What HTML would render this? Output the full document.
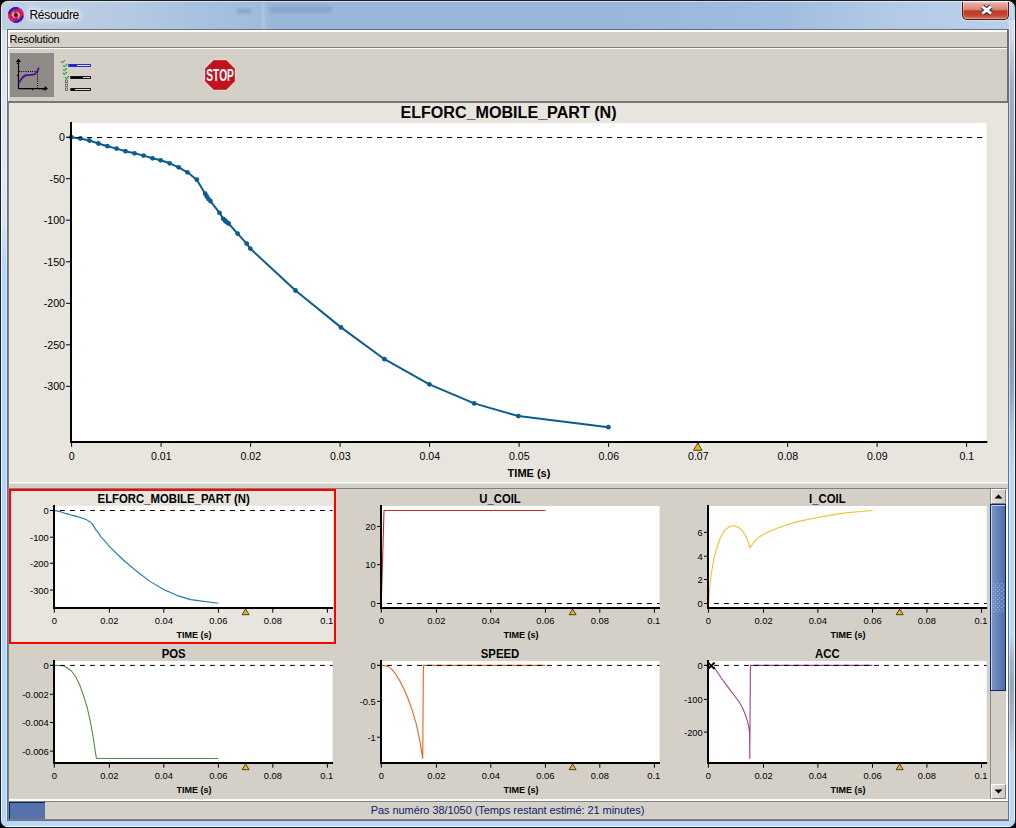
<!DOCTYPE html>
<html><head><meta charset="utf-8"><title>Résoudre</title>
<style>
html,body{margin:0;padding:0;}
body{width:1016px;height:828px;overflow:hidden;background:#000;font-family:"Liberation Sans", sans-serif;position:relative;}
.abs{position:absolute;}
#frame{left:0;top:0;width:1016px;height:828px;box-sizing:border-box;border:1px solid #1c1f26;border-radius:8px 8px 8px 8px;
 background:
  linear-gradient(to right,#c0d0e2 0px,#bccde2 60px,#b4c9e2 130px,#a6c0e0 210px,#a0bbdc 262px,#9ab6d9 270px,#9ab6d9 620px,#a0bcde 780px,#b2c9e6 880px,#bbd0e9 1016px);
 overflow:hidden;}
#frameL{left:0px;top:29px;width:6px;height:791px;background:linear-gradient(to right,rgba(255,255,255,.8) 0,rgba(255,255,255,.8) 1px,rgba(255,255,255,0) 1px,rgba(255,255,255,0) 5px,rgba(255,255,255,.5) 5px,rgba(255,255,255,.5) 6px),linear-gradient(to bottom,#d9e4f1 0,#dfe9f5 150px,#d3e3f6 195px,#b9d7f9 225px,#b5d6fb 240px,#b5d6fb 100%);}
#frameR{left:1008px;top:19px;width:6px;height:801px;background:linear-gradient(to right,rgba(255,255,255,.5) 0,rgba(255,255,255,.5) 1px,rgba(255,255,255,0) 1px,rgba(255,255,255,.08) 5px,rgba(255,255,255,.8) 5px,rgba(255,255,255,.8) 6px),linear-gradient(to bottom,#ccd6ea 0,#c8d0e8 22px,#b4c0d8 40px,#98aac4 70px,#869cb8 260px,#7f97b6 330px,#86a3c8 370px,#a4c4ea 410px,#b5d6fb 450px,#b5d6fb 615px,#9fb5cc 640px,#8fa3b8 665px,#a0b4c8 700px,#b5d6fb 735px,#b5d6fb 100%);}
#frameB{left:0px;top:819px;width:1014px;height:7px;background:linear-gradient(to bottom,#b9d9fb 0,#b9d9fb 6px,#eefaff 6px,#eefaff 7px);}
#hl{left:1px;top:1px;width:1012px;height:826px;border:1px solid rgba(255,255,255,.55);border-radius:7px;box-sizing:border-box;border-bottom:none;border-right-color:rgba(255,255,255,.4);height:40px;border-bottom-left-radius:0;border-bottom-right-radius:0;}
#client{left:7px;top:29px;width:1002px;height:792px;box-sizing:border-box;border:1px solid #6a7078;background:#d4d0c8;}
#title{left:29.5px;top:8px;font-size:12px;color:#000;letter-spacing:-0.32px;text-shadow:0 0 6px #fff,0 0 6px #fff,0 0 10px #fff;}
#close{left:962px;top:2px;width:47px;height:18px;box-sizing:border-box;border:1px solid #4e1a16;border-top:none;border-radius:0 0 5px 5px;
 background:linear-gradient(to bottom,#eeb0a6 0,#e09a8c 25%,#d48070 46%,#c23c26 52%,#c4422c 75%,#d27458 100%);box-shadow:inset 0 0 0 1px rgba(255,255,255,.3),0 0 0 1px rgba(255,255,255,.35);}
#menubar{left:8px;top:30px;width:1000px;height:17px;background:#d4d0c8;border-top:2px solid #fff;border-left:2px solid #fff;box-sizing:border-box;}
#menutxt{left:9.5px;top:33px;font-size:11px;color:#000;letter-spacing:-0.2px;}
#sep1{left:8px;top:47px;width:1000px;height:1px;background:#808080;}
#sep1b{left:8px;top:48px;width:1000px;height:1px;background:#fff;}
#toolbar{left:8px;top:49px;width:1000px;height:52px;background:#d4d0c8;border-left:1px solid #fff;box-sizing:border-box;}
#sep2{left:8px;top:101px;width:1000px;height:2px;background:#767877;}
#mainp{left:8px;top:103px;width:1000px;height:379px;background:#e8e4de;}
#mainpL{left:8px;top:103px;width:1px;height:717px;background:#7c8685;}
#sep3{left:8px;top:482px;width:1000px;height:2px;background:linear-gradient(#fdfdfc 0,#fdfdfc 50%,#e6e4df 50%,#e6e4df 100%);}
#lowp{left:8px;top:484px;width:1000px;height:316px;background:#d4d0c8;}
#sep4{left:8px;top:488px;width:999px;height:1px;background:#808080;}
#sel{left:9px;top:489px;width:327px;height:155px;box-sizing:border-box;border:2px solid #f00;background:#e8e4de;}
#rwhite{left:1006px;top:489px;width:2px;height:311px;background:#fff;}
#sb{left:990px;top:489px;width:16px;height:310px;background:#d4d0c8;border-left:1px solid #8a8a86;box-sizing:border-box;}
.sbtn{left:991px;width:15px;height:15px;box-sizing:border-box;background:linear-gradient(to right,#e4e1da,#cfcbc3);border:1px solid;border-color:#fff #808080 #808080 #fff;}
#thumb{left:990px;top:504px;width:16px;height:187px;box-sizing:border-box;border:1px solid #0a246a;background:linear-gradient(to right,#7f98c8 0,#6783b8 45%,#4f6ea9 100%);box-shadow:inset 1px 1px 0 #b9d3f5;}
#sep5{left:8px;top:799px;width:1000px;height:2px;background:#fff;}
#sep6{left:8px;top:801px;width:1000px;height:1px;background:#808080;}
#status{left:8px;top:802px;width:1000px;height:17px;background:#d4d0c8;}
#prog{left:9px;top:802px;width:36px;height:17px;background:#5572ac;border-left:1px solid #0a246a;border-top:1px solid #0a246a;box-sizing:border-box;}
#stxt{left:7.5px;top:804px;width:1000px;text-align:center;font-size:11px;color:#0a246a;letter-spacing:-0.065px;}
#sep7{left:8px;top:819px;width:1000px;height:1px;background:#808080;}
.tk{font:11px "Liberation Sans", sans-serif;fill:#000;}
.tkb{font:bold 11px "Liberation Sans", sans-serif;fill:#000;}
.ttl{font:bold 16px "Liberation Sans", sans-serif;fill:#000;}
.tks{font:9.4px "Liberation Sans", sans-serif;fill:#000;}
.tksb{font:bold 9px "Liberation Sans", sans-serif;fill:#000;}
.ttls{font:bold 12.4px "Liberation Sans", sans-serif;fill:#000;}
</style></head><body>
<div id="frame" class="abs"><div id="frameL" class="abs"></div><div id="frameR" class="abs"></div><div id="frameB" class="abs"></div></div>
<div id="hl" class="abs"></div>
<div id="client" class="abs"></div>
<div class="abs" style="left:270px;top:6px;width:62px;height:7px;background:#7d9ac2;opacity:.55;filter:blur(1.6px);border-radius:3px"></div><div class="abs" style="left:237px;top:9px;width:14px;height:4px;background:#7088a8;opacity:.5;filter:blur(1.5px)"></div><div class="abs" style="left:262px;top:2px;width:3px;height:27px;background:#b8cce6;opacity:.7;filter:blur(1px)"></div>
<div id="title" class="abs">Résoudre</div>
<div id="close" class="abs"><svg width="45" height="18" viewBox="0 0 45 18" style="position:absolute;left:0;top:0"><path d="M19.4,4.5 L28,11.5 M28,4.5 L19.4,11.5" stroke="#3a3f58" stroke-width="5" fill="none"/><path d="M19.4,4.5 L28,11.5 M28,4.5 L19.4,11.5" stroke="#fff" stroke-width="2.9" fill="none"/></svg></div>
<div id="menubar" class="abs"></div><div id="menutxt" class="abs">Resolution</div>
<div id="sep1" class="abs"></div><div id="sep1b" class="abs"></div>
<div id="toolbar" class="abs"></div><div id="sep2" class="abs"></div><div class="abs" style="left:1007px;top:30px;width:1px;height:72px;background:#6e6e6e"></div>
<div id="mainp" class="abs"></div>
<div id="sep3" class="abs"></div>
<div id="lowp" class="abs"></div><div id="sep4" class="abs"></div>
<div id="sel" class="abs"></div>
<div id="rwhite" class="abs"></div>
<div id="sb" class="abs"></div>
<div class="abs sbtn" style="top:489px"><svg width="13" height="13" style="position:absolute;left:0;top:0"><path d="M2.5,8.5 L6.5,4.5 L10.5,8.5 Z" fill="#000"/></svg></div>
<div class="abs sbtn" style="top:784px"><svg width="13" height="13" style="position:absolute;left:0;top:0"><path d="M2.5,4.5 L6.5,8.5 L10.5,4.5 Z" fill="#000"/></svg></div>
<div id="thumb" class="abs"></div>
<svg class="abs" style="left:993px;top:583px" width="12" height="30" viewBox="0 0 12 30"><defs><pattern id="gp" x="0" y="0" width="4" height="4" patternUnits="userSpaceOnUse"><rect x="0" y="0" width="1.2" height="1.2" fill="#9db6e4"/><rect x="2" y="2" width="1.2" height="1.2" fill="#9db6e4"/></pattern></defs><rect x="0" y="0" width="11.3" height="29.3" fill="url(#gp)"/></svg>
<div id="sep5" class="abs"></div><div id="sep6" class="abs"></div>
<div id="status" class="abs"></div><div id="prog" class="abs"></div>
<div id="stxt" class="abs">Pas numéro 38/1050 (Temps restant estimé: 21 minutes)</div>
<div id="sep7" class="abs"></div><div id="mainpL" class="abs"></div>
<svg class="abs" style="left:0;top:0" width="1016" height="110" viewBox="0 0 1016 110">
<defs><radialGradient id="sw" cx="0.5" cy="0.5" r="0.5"><stop offset="0" stop-color="#e01888"/><stop offset="0.55" stop-color="#f0204a"/><stop offset="0.8" stop-color="#f0105e"/><stop offset="1" stop-color="#c218c0"/></radialGradient></defs>
<g transform="translate(15.9,14.9)">
<circle cx="0" cy="0" r="8" fill="url(#sw)"/>
<path d="M-6.6,-1.8 A6.9,6.9 0 0 1 1.2,-6.8" stroke="#2418c8" stroke-width="2.1" fill="none" stroke-linecap="round"/>
<path d="M6.6,1.8 A6.9,6.9 0 0 1 -1.2,6.8" stroke="#2418c8" stroke-width="2.1" fill="none" stroke-linecap="round"/>
<circle cx="0" cy="0" r="4.6" fill="#c01ca0" stroke="#3a1cb0" stroke-width="1" stroke-dasharray="1.6,1.2"/>
<path d="M-1.6,-3.6 C-5.2,-2.2 -4.6,2.6 -0.6,3.2 C-2.6,1.6 -3,-1.2 -1.6,-3.6 Z" fill="#ffee00" stroke="#ff8a00" stroke-width="0.5"/>
<path d="M1.6,3.6 C5.2,2.2 4.6,-2.6 0.6,-3.2 C2.6,-1.6 3,1.2 1.6,3.6 Z" fill="#ffee00" stroke="#ff8a00" stroke-width="0.5"/>
<circle cx="0" cy="0" r="1.5" fill="#1c0c86"/>
</g>
<rect x="10" y="53" width="44" height="44" fill="#8f8b86"/>
<path d="M18.5,61 V88.6 M18,88.6 H46" stroke="#000" stroke-width="1.2" fill="none"/>
<path d="M18.5,58.8 l-2.6,3.3 h5.2 z M48,88.6 l-3.4,-2.5 v5 z" fill="#000"/>
<path d="M19,71.5 H38.5 M37.5,72 V88" stroke="#000" stroke-width="1" stroke-dasharray="1,1.2" fill="none"/>
<path d="M16.8,63.5 h1.5 M16.8,75.5 h1.5 M32.5,89 v1.2 M43,89 v1.2" stroke="#000" stroke-width="1"/>
<path d="M19,82.5 C21.5,79 23,76 26,75.3 C30,74.6 33,75.2 35,74 C37,72.8 38,71 38.5,68.5" stroke="#500f90" stroke-width="1.9" fill="none" stroke-linecap="round"/>
<path d="M61,61.3 l1.4,1.3 l2.7,-2.5" stroke="#18a018" stroke-width="1.1" fill="none"/>
<path d="M63,65.3 l1.4,1.3 l2.7,-2.5" stroke="#18a018" stroke-width="1.1" fill="none"/>
<path d="M63,69.3 l1.4,1.3 l2.7,-2.5" stroke="#18a018" stroke-width="1.1" fill="none"/>
<path d="M63,73.0 l1.4,1.3 l2.7,-2.5" stroke="#18a018" stroke-width="1.1" fill="none"/>
<path d="M65,77.3 l1.4,1.3 l2.7,-2.5" stroke="#18a018" stroke-width="1.1" fill="none"/>
<rect x="65.5" y="80" width="2" height="2.4" fill="#ddd" stroke="#444" stroke-width="0.7"/>
<rect x="65.5" y="84" width="2" height="2.4" fill="#ddd" stroke="#444" stroke-width="0.7"/>
<rect x="65.5" y="88" width="2" height="2.4" fill="#ddd" stroke="#444" stroke-width="0.7"/>
<rect x="68.3" y="64.1" width="22.6" height="2.8" fill="#1a1acc"/><rect x="77" y="65" width="13" height="1" fill="#dde"/>
<rect x="70.3" y="76.1" width="20.6" height="2.8" fill="#000"/><rect x="83" y="77" width="7" height="1" fill="#ddd"/>
<rect x="70.3" y="88.1" width="20.6" height="2.8" fill="#000"/><rect x="75" y="89" width="15" height="1" fill="#ddd"/>
<polygon points="235.34,81.35 226.35,90.34 213.65,90.34 204.66,81.35 204.66,68.65 213.65,59.66 226.35,59.66 235.34,68.65" fill="#c1121f" stroke="#ecebe6" stroke-width="1"/>
<text x="220.1" y="80.7" text-anchor="middle" style="font:bold 16px 'Liberation Sans',sans-serif;fill:#fff" textLength="27.6" lengthAdjust="spacingAndGlyphs">STOP</text>
</svg>
<svg class="abs" style="left:0;top:0" width="1016" height="828" viewBox="0 0 1016 828">
<rect x="72" y="123" width="914.5" height="318" fill="#fff"/>
<path d="M71.3,137.2 L80.3,138.5 L89.4,140.5 L98.4,143.5 L107.4,146.2 L116.5,148.6 L125.5,151.2 L134.5,153.3 L143.6,155.6 L152.6,158.3 L160.6,160.3 L169.7,163.3 L178.7,167.3 L187.4,172.3 L196.8,179.7 L205.2,193.7 L206.8,196.4 L208.5,199.1 L210.5,201.1 L219.5,212.8 L223.2,218.8 L224.9,220.5 L226.6,222.2 L228.6,223.5 L237.6,233.6 L246.7,243.6 L250.3,248.6 L295.5,290.5 L341.0,327.4 L384.5,359.2 L429.4,384.3 L474.2,403.4 L518.4,416.1 L608.4,427.2" fill="none" stroke="#0c5c8f" stroke-width="2" stroke-linejoin="round"/>
<circle cx="71.3" cy="137.2" r="2.4" fill="#0c5c8f"/>
<circle cx="80.3" cy="138.5" r="2.4" fill="#0c5c8f"/>
<circle cx="89.4" cy="140.5" r="2.4" fill="#0c5c8f"/>
<circle cx="98.4" cy="143.5" r="2.4" fill="#0c5c8f"/>
<circle cx="107.4" cy="146.2" r="2.4" fill="#0c5c8f"/>
<circle cx="116.5" cy="148.6" r="2.4" fill="#0c5c8f"/>
<circle cx="125.5" cy="151.2" r="2.4" fill="#0c5c8f"/>
<circle cx="134.5" cy="153.3" r="2.4" fill="#0c5c8f"/>
<circle cx="143.6" cy="155.6" r="2.4" fill="#0c5c8f"/>
<circle cx="152.6" cy="158.3" r="2.4" fill="#0c5c8f"/>
<circle cx="160.6" cy="160.3" r="2.4" fill="#0c5c8f"/>
<circle cx="169.7" cy="163.3" r="2.4" fill="#0c5c8f"/>
<circle cx="178.7" cy="167.3" r="2.4" fill="#0c5c8f"/>
<circle cx="187.4" cy="172.3" r="2.4" fill="#0c5c8f"/>
<circle cx="196.8" cy="179.7" r="2.4" fill="#0c5c8f"/>
<circle cx="205.2" cy="193.7" r="2.4" fill="#0c5c8f"/>
<circle cx="206.8" cy="196.4" r="2.4" fill="#0c5c8f"/>
<circle cx="208.5" cy="199.1" r="2.4" fill="#0c5c8f"/>
<circle cx="210.5" cy="201.1" r="2.4" fill="#0c5c8f"/>
<circle cx="219.5" cy="212.8" r="2.4" fill="#0c5c8f"/>
<circle cx="223.2" cy="218.8" r="2.4" fill="#0c5c8f"/>
<circle cx="224.9" cy="220.5" r="2.4" fill="#0c5c8f"/>
<circle cx="226.6" cy="222.2" r="2.4" fill="#0c5c8f"/>
<circle cx="228.6" cy="223.5" r="2.4" fill="#0c5c8f"/>
<circle cx="237.6" cy="233.6" r="2.4" fill="#0c5c8f"/>
<circle cx="246.7" cy="243.6" r="2.4" fill="#0c5c8f"/>
<circle cx="250.3" cy="248.6" r="2.4" fill="#0c5c8f"/>
<circle cx="295.5" cy="290.5" r="2.4" fill="#0c5c8f"/>
<circle cx="341.0" cy="327.4" r="2.4" fill="#0c5c8f"/>
<circle cx="384.5" cy="359.2" r="2.4" fill="#0c5c8f"/>
<circle cx="429.4" cy="384.3" r="2.4" fill="#0c5c8f"/>
<circle cx="474.2" cy="403.4" r="2.4" fill="#0c5c8f"/>
<circle cx="518.4" cy="416.1" r="2.4" fill="#0c5c8f"/>
<circle cx="608.4" cy="427.2" r="2.4" fill="#0c5c8f"/>
<line x1="67" y1="137.5" x2="986.5" y2="137.5" stroke="#000" stroke-width="1" stroke-dasharray="5.2,4.8"/>
<rect x="70" y="122" width="2" height="321" fill="#000"/>
<rect x="70" y="441" width="917.3" height="2" fill="#000"/>
<line x1="66" y1="137.2" x2="70" y2="137.2" stroke="#000" stroke-width="1"/>
<text transform="translate(65,141.2) scale(0.97,1)" text-anchor="end" class="tk">0</text>
<line x1="66" y1="178.7" x2="70" y2="178.7" stroke="#000" stroke-width="1"/>
<text transform="translate(65,182.7) scale(0.97,1)" text-anchor="end" class="tk">-50</text>
<line x1="66" y1="220.2" x2="70" y2="220.2" stroke="#000" stroke-width="1"/>
<text transform="translate(65,224.2) scale(0.97,1)" text-anchor="end" class="tk">-100</text>
<line x1="66" y1="261.8" x2="70" y2="261.8" stroke="#000" stroke-width="1"/>
<text transform="translate(65,265.8) scale(0.97,1)" text-anchor="end" class="tk">-150</text>
<line x1="66" y1="303.3" x2="70" y2="303.3" stroke="#000" stroke-width="1"/>
<text transform="translate(65,307.3) scale(0.97,1)" text-anchor="end" class="tk">-200</text>
<line x1="66" y1="344.8" x2="70" y2="344.8" stroke="#000" stroke-width="1"/>
<text transform="translate(65,348.8) scale(0.97,1)" text-anchor="end" class="tk">-250</text>
<line x1="66" y1="386.3" x2="70" y2="386.3" stroke="#000" stroke-width="1"/>
<text transform="translate(65,390.3) scale(0.97,1)" text-anchor="end" class="tk">-300</text>
<line x1="71.6" y1="443" x2="71.6" y2="446.8" stroke="#000" stroke-width="1"/>
<text transform="translate(71.8,460.2) scale(0.96,1)" text-anchor="middle" class="tk">0</text>
<line x1="161.1" y1="443" x2="161.1" y2="446.8" stroke="#000" stroke-width="1"/>
<text transform="translate(161.3,460.2) scale(0.96,1)" text-anchor="middle" class="tk">0.01</text>
<line x1="250.6" y1="443" x2="250.6" y2="446.8" stroke="#000" stroke-width="1"/>
<text transform="translate(250.8,460.2) scale(0.96,1)" text-anchor="middle" class="tk">0.02</text>
<line x1="340.1" y1="443" x2="340.1" y2="446.8" stroke="#000" stroke-width="1"/>
<text transform="translate(340.3,460.2) scale(0.96,1)" text-anchor="middle" class="tk">0.03</text>
<line x1="429.6" y1="443" x2="429.6" y2="446.8" stroke="#000" stroke-width="1"/>
<text transform="translate(429.8,460.2) scale(0.96,1)" text-anchor="middle" class="tk">0.04</text>
<line x1="519.1" y1="443" x2="519.1" y2="446.8" stroke="#000" stroke-width="1"/>
<text transform="translate(519.3,460.2) scale(0.96,1)" text-anchor="middle" class="tk">0.05</text>
<line x1="608.6" y1="443" x2="608.6" y2="446.8" stroke="#000" stroke-width="1"/>
<text transform="translate(608.8,460.2) scale(0.96,1)" text-anchor="middle" class="tk">0.06</text>
<line x1="698.1" y1="443" x2="698.1" y2="446.8" stroke="#000" stroke-width="1"/>
<text transform="translate(698.3,460.2) scale(0.96,1)" text-anchor="middle" class="tk">0.07</text>
<line x1="787.6" y1="443" x2="787.6" y2="446.8" stroke="#000" stroke-width="1"/>
<text transform="translate(787.8,460.2) scale(0.96,1)" text-anchor="middle" class="tk">0.08</text>
<line x1="877.1" y1="443" x2="877.1" y2="446.8" stroke="#000" stroke-width="1"/>
<text transform="translate(877.3,460.2) scale(0.96,1)" text-anchor="middle" class="tk">0.09</text>
<line x1="966.6" y1="443" x2="966.6" y2="446.8" stroke="#000" stroke-width="1"/>
<text transform="translate(966.8,460.2) scale(0.96,1)" text-anchor="middle" class="tk">0.1</text>
<path d="M693.6,450.3 L697.8,443 L702.0,450.3 Z" fill="#f5b800" stroke="#222" stroke-width="0.8"/>
<text x="529" y="477" text-anchor="middle" class="tkb">TIME (s)</text>
<text x="508.5" y="118" text-anchor="middle" class="ttl" textLength="216.2" lengthAdjust="spacingAndGlyphs">ELFORC_MOBILE_PART (N)</text>
</svg>
<svg class="abs" style="left:0;top:0" width="1016" height="828" viewBox="0 0 1016 828">
<rect x="55.0" y="506" width="277.6" height="101" fill="#fff"/>
<path d="M54.3,510.5 L57.0,510.9 L59.8,511.6 L62.6,512.5 L65.3,513.4 L68.1,514.1 L70.9,515.0 L73.6,515.6 L76.4,516.4 L79.1,517.2 L81.6,517.9 L84.3,518.8 L87.1,520.1 L89.8,521.7 L92.6,524.1 L95.2,528.6 L95.7,529.4 L96.2,530.3 L96.8,530.9 L99.6,534.7 L100.7,536.6 L101.2,537.1 L101.7,537.7 L102.3,538.1 L105.1,541.3 L107.9,544.5 L109.0,546.1 L122.8,559.5 L136.7,571.3 L149.9,581.4 L163.7,589.5 L177.3,595.6 L190.8,599.6 L218.3,603.2" fill="none" stroke="#2474a6" stroke-width="1.1" stroke-linejoin="round"/>
<line x1="50.0" y1="510.5" x2="332.6" y2="510.5" stroke="#000" stroke-width="1" stroke-dasharray="4.9,5.1"/>
<rect x="53" y="505" width="2" height="104" fill="#000"/>
<rect x="53" y="607" width="280.0" height="2" fill="#000"/>
<line x1="50.0" y1="510.5" x2="53.0" y2="510.5" stroke="#000" stroke-width="1"/>
<text x="48.8" y="513.9" text-anchor="end" class="tks">0</text>
<line x1="50.0" y1="537.2" x2="53.0" y2="537.2" stroke="#000" stroke-width="1"/>
<text x="48.8" y="540.6" text-anchor="end" class="tks">-100</text>
<line x1="50.0" y1="563.3" x2="53.0" y2="563.3" stroke="#000" stroke-width="1"/>
<text x="48.8" y="566.7" text-anchor="end" class="tks">-200</text>
<line x1="50.0" y1="590.1" x2="53.0" y2="590.1" stroke="#000" stroke-width="1"/>
<text x="48.8" y="593.5" text-anchor="end" class="tks">-300</text>
<line x1="54.3" y1="609" x2="54.3" y2="612.7" stroke="#000" stroke-width="1"/>
<text x="54.3" y="624.0" text-anchor="middle" class="tks">0</text>
<line x1="109.4" y1="609" x2="109.4" y2="612.7" stroke="#000" stroke-width="1"/>
<text x="109.4" y="624.0" text-anchor="middle" class="tks">0.02</text>
<line x1="163.8" y1="609" x2="163.8" y2="612.7" stroke="#000" stroke-width="1"/>
<text x="163.8" y="624.0" text-anchor="middle" class="tks">0.04</text>
<line x1="218.4" y1="609" x2="218.4" y2="612.7" stroke="#000" stroke-width="1"/>
<text x="218.4" y="624.0" text-anchor="middle" class="tks">0.06</text>
<line x1="272.8" y1="609" x2="272.8" y2="612.7" stroke="#000" stroke-width="1"/>
<text x="272.8" y="624.0" text-anchor="middle" class="tks">0.08</text>
<line x1="327.4" y1="609" x2="327.4" y2="612.7" stroke="#000" stroke-width="1"/>
<text x="326.8" y="624.0" text-anchor="middle" class="tks">0.1</text>
<path d="M242.1,614.7 L245.6,609.0 L249.1,614.7 Z" fill="#f5b800" stroke="#222" stroke-width="0.8"/>
<text x="193.9" y="638.2" text-anchor="middle" class="tksb">TIME (s)</text>
<text transform="translate(173.7,502.7) scale(0.915,1)" x="0" y="0" text-anchor="middle" class="ttls">ELFORC_MOBILE_PART (N)</text>

<rect x="382.0" y="506" width="277.6" height="101" fill="#fff"/>
<path d="M381.3,603.5 L384.0,510.5 L545.3,510.5" fill="none" stroke="#c42a1c" stroke-width="1.1" stroke-linejoin="round"/>
<line x1="377.0" y1="603.5" x2="659.6" y2="603.5" stroke="#000" stroke-width="1" stroke-dasharray="4.9,5.1"/>
<rect x="380" y="505" width="2" height="104" fill="#000"/>
<rect x="380" y="607" width="280.0" height="2" fill="#000"/>
<line x1="377.0" y1="526.5" x2="380.0" y2="526.5" stroke="#000" stroke-width="1"/>
<text x="375.8" y="529.9" text-anchor="end" class="tks">20</text>
<line x1="377.0" y1="564.7" x2="380.0" y2="564.7" stroke="#000" stroke-width="1"/>
<text x="375.8" y="568.1" text-anchor="end" class="tks">10</text>
<line x1="377.0" y1="603.5" x2="380.0" y2="603.5" stroke="#000" stroke-width="1"/>
<text x="375.8" y="606.9" text-anchor="end" class="tks">0</text>
<line x1="381.3" y1="609" x2="381.3" y2="612.7" stroke="#000" stroke-width="1"/>
<text x="381.3" y="624.0" text-anchor="middle" class="tks">0</text>
<line x1="436.4" y1="609" x2="436.4" y2="612.7" stroke="#000" stroke-width="1"/>
<text x="436.4" y="624.0" text-anchor="middle" class="tks">0.02</text>
<line x1="490.8" y1="609" x2="490.8" y2="612.7" stroke="#000" stroke-width="1"/>
<text x="490.8" y="624.0" text-anchor="middle" class="tks">0.04</text>
<line x1="545.4" y1="609" x2="545.4" y2="612.7" stroke="#000" stroke-width="1"/>
<text x="545.4" y="624.0" text-anchor="middle" class="tks">0.06</text>
<line x1="599.8" y1="609" x2="599.8" y2="612.7" stroke="#000" stroke-width="1"/>
<text x="599.8" y="624.0" text-anchor="middle" class="tks">0.08</text>
<line x1="654.4" y1="609" x2="654.4" y2="612.7" stroke="#000" stroke-width="1"/>
<text x="653.8" y="624.0" text-anchor="middle" class="tks">0.1</text>
<path d="M569.1,614.7 L572.6,609.0 L576.1,614.7 Z" fill="#f5b800" stroke="#222" stroke-width="0.8"/>
<text x="520.9" y="638.2" text-anchor="middle" class="tksb">TIME (s)</text>
<text transform="translate(500.0,502.7) scale(0.915,1)" x="0" y="0" text-anchor="middle" class="ttls">U_COIL</text>

<rect x="709.0" y="506" width="277.7" height="101" fill="#fff"/>
<path d="M708.8,603.5 L709.4,590.3 L711.1,575.0 L713.9,558.3 L717.4,545.8 L720.8,536.8 L725.0,529.9 L729.2,526.7 L733.3,525.7 L737.5,526.7 L741.7,529.9 L745.1,534.7 L747.9,541.0 L749.9,547.6 L752.8,543.8 L756.9,538.9 L762.5,534.7 L769.4,531.5 L777.8,528.1 L786.1,525.0 L794.4,522.6 L800.0,521.1 L809.9,519.0 L826.6,515.9 L843.3,513.1 L860.0,511.5 L872.6,510.5" fill="none" stroke="#f5c02c" stroke-width="1.1" stroke-linejoin="round"/>
<line x1="704.0" y1="603.5" x2="986.7" y2="603.5" stroke="#000" stroke-width="1" stroke-dasharray="4.9,5.1"/>
<rect x="707" y="505" width="2" height="104" fill="#000"/>
<rect x="707" y="607" width="280.1" height="2" fill="#000"/>
<line x1="704.0" y1="532.4" x2="707.0" y2="532.4" stroke="#000" stroke-width="1"/>
<text x="702.8" y="535.8" text-anchor="end" class="tks">6</text>
<line x1="704.0" y1="556.2" x2="707.0" y2="556.2" stroke="#000" stroke-width="1"/>
<text x="702.8" y="559.6" text-anchor="end" class="tks">4</text>
<line x1="704.0" y1="579.5" x2="707.0" y2="579.5" stroke="#000" stroke-width="1"/>
<text x="702.8" y="582.9" text-anchor="end" class="tks">2</text>
<line x1="704.0" y1="603.5" x2="707.0" y2="603.5" stroke="#000" stroke-width="1"/>
<text x="702.8" y="606.9" text-anchor="end" class="tks">0</text>
<line x1="708.4" y1="609" x2="708.4" y2="612.7" stroke="#000" stroke-width="1"/>
<text x="708.4" y="624.0" text-anchor="middle" class="tks">0</text>
<line x1="763.5" y1="609" x2="763.5" y2="612.7" stroke="#000" stroke-width="1"/>
<text x="763.5" y="624.0" text-anchor="middle" class="tks">0.02</text>
<line x1="817.9" y1="609" x2="817.9" y2="612.7" stroke="#000" stroke-width="1"/>
<text x="817.9" y="624.0" text-anchor="middle" class="tks">0.04</text>
<line x1="872.5" y1="609" x2="872.5" y2="612.7" stroke="#000" stroke-width="1"/>
<text x="872.5" y="624.0" text-anchor="middle" class="tks">0.06</text>
<line x1="926.9" y1="609" x2="926.9" y2="612.7" stroke="#000" stroke-width="1"/>
<text x="926.9" y="624.0" text-anchor="middle" class="tks">0.08</text>
<line x1="981.5" y1="609" x2="981.5" y2="612.7" stroke="#000" stroke-width="1"/>
<text x="980.9" y="624.0" text-anchor="middle" class="tks">0.1</text>
<path d="M896.2,614.7 L899.7,609.0 L903.2,614.7 Z" fill="#f5b800" stroke="#222" stroke-width="0.8"/>
<text x="848.0" y="638.2" text-anchor="middle" class="tksb">TIME (s)</text>
<text transform="translate(827.3,502.7) scale(0.915,1)" x="0" y="0" text-anchor="middle" class="ttls">I_COIL</text>

<rect x="55.0" y="661" width="277.6" height="101" fill="#fff"/>
<path d="M54.7,665.4 L63.1,665.8 L67.2,667.8 L71.4,671.0 L75.6,676.5 L79.7,684.9 L83.9,696.7 L87.4,708.5 L90.1,720.3 L92.9,735.6 L95.0,749.4 L96.4,758.5 L218.4,758.5" fill="none" stroke="#5a8a48" stroke-width="1.1" stroke-linejoin="round"/>
<line x1="50.0" y1="665.4" x2="332.6" y2="665.4" stroke="#000" stroke-width="1" stroke-dasharray="4.9,5.1"/>
<rect x="53" y="660" width="2" height="104" fill="#000"/>
<rect x="53" y="762" width="280.0" height="2" fill="#000"/>
<line x1="50.0" y1="665.4" x2="53.0" y2="665.4" stroke="#000" stroke-width="1"/>
<text x="48.8" y="668.8" text-anchor="end" class="tks">0</text>
<line x1="50.0" y1="694.3" x2="53.0" y2="694.3" stroke="#000" stroke-width="1"/>
<text x="48.8" y="697.7" text-anchor="end" class="tks">-0.002</text>
<line x1="50.0" y1="722.5" x2="53.0" y2="722.5" stroke="#000" stroke-width="1"/>
<text x="48.8" y="725.9" text-anchor="end" class="tks">-0.004</text>
<line x1="50.0" y1="751.1" x2="53.0" y2="751.1" stroke="#000" stroke-width="1"/>
<text x="48.8" y="754.5" text-anchor="end" class="tks">-0.006</text>
<line x1="54.3" y1="764" x2="54.3" y2="767.7" stroke="#000" stroke-width="1"/>
<text x="54.3" y="779.0" text-anchor="middle" class="tks">0</text>
<line x1="109.4" y1="764" x2="109.4" y2="767.7" stroke="#000" stroke-width="1"/>
<text x="109.4" y="779.0" text-anchor="middle" class="tks">0.02</text>
<line x1="163.8" y1="764" x2="163.8" y2="767.7" stroke="#000" stroke-width="1"/>
<text x="163.8" y="779.0" text-anchor="middle" class="tks">0.04</text>
<line x1="218.4" y1="764" x2="218.4" y2="767.7" stroke="#000" stroke-width="1"/>
<text x="218.4" y="779.0" text-anchor="middle" class="tks">0.06</text>
<line x1="272.8" y1="764" x2="272.8" y2="767.7" stroke="#000" stroke-width="1"/>
<text x="272.8" y="779.0" text-anchor="middle" class="tks">0.08</text>
<line x1="327.4" y1="764" x2="327.4" y2="767.7" stroke="#000" stroke-width="1"/>
<text x="326.8" y="779.0" text-anchor="middle" class="tks">0.1</text>
<path d="M242.1,769.7 L245.6,764.0 L249.1,769.7 Z" fill="#f5b800" stroke="#222" stroke-width="0.8"/>
<text x="193.9" y="793.2" text-anchor="middle" class="tksb">TIME (s)</text>
<text transform="translate(173.7,657.7) scale(0.915,1)" x="0" y="0" text-anchor="middle" class="ttls">POS</text>

<rect x="382.0" y="661" width="277.6" height="101" fill="#fff"/>
<path d="M381.7,665.4 L387.3,666.1 L391.4,668.9 L395.6,673.8 L399.8,680.7 L403.9,689.0 L408.1,698.8 L412.3,710.6 L416.4,724.4 L419.9,741.1 L422.7,758.5 L423.4,665.4 L545.4,665.4" fill="none" stroke="#e8641e" stroke-width="1.1" stroke-linejoin="round"/>
<line x1="377.0" y1="665.4" x2="659.6" y2="665.4" stroke="#000" stroke-width="1" stroke-dasharray="4.9,5.1"/>
<rect x="380" y="660" width="2" height="104" fill="#000"/>
<rect x="380" y="762" width="280.0" height="2" fill="#000"/>
<line x1="377.0" y1="665.4" x2="380.0" y2="665.4" stroke="#000" stroke-width="1"/>
<text x="375.8" y="668.8" text-anchor="end" class="tks">0</text>
<line x1="377.0" y1="701.3" x2="380.0" y2="701.3" stroke="#000" stroke-width="1"/>
<text x="375.8" y="704.7" text-anchor="end" class="tks">-0.5</text>
<line x1="377.0" y1="737.2" x2="380.0" y2="737.2" stroke="#000" stroke-width="1"/>
<text x="375.8" y="740.6" text-anchor="end" class="tks">-1</text>
<line x1="381.3" y1="764" x2="381.3" y2="767.7" stroke="#000" stroke-width="1"/>
<text x="381.3" y="779.0" text-anchor="middle" class="tks">0</text>
<line x1="436.4" y1="764" x2="436.4" y2="767.7" stroke="#000" stroke-width="1"/>
<text x="436.4" y="779.0" text-anchor="middle" class="tks">0.02</text>
<line x1="490.8" y1="764" x2="490.8" y2="767.7" stroke="#000" stroke-width="1"/>
<text x="490.8" y="779.0" text-anchor="middle" class="tks">0.04</text>
<line x1="545.4" y1="764" x2="545.4" y2="767.7" stroke="#000" stroke-width="1"/>
<text x="545.4" y="779.0" text-anchor="middle" class="tks">0.06</text>
<line x1="599.8" y1="764" x2="599.8" y2="767.7" stroke="#000" stroke-width="1"/>
<text x="599.8" y="779.0" text-anchor="middle" class="tks">0.08</text>
<line x1="654.4" y1="764" x2="654.4" y2="767.7" stroke="#000" stroke-width="1"/>
<text x="653.8" y="779.0" text-anchor="middle" class="tks">0.1</text>
<path d="M569.1,769.7 L572.6,764.0 L576.1,769.7 Z" fill="#f5b800" stroke="#222" stroke-width="0.8"/>
<text x="520.9" y="793.2" text-anchor="middle" class="tksb">TIME (s)</text>
<text transform="translate(500.0,657.7) scale(0.915,1)" x="0" y="0" text-anchor="middle" class="ttls">SPEED</text>

<rect x="709.0" y="661" width="277.7" height="101" fill="#fff"/>
<path d="M713.9,666.8 L720.8,677.2 L727.8,686.9 L734.7,696.0 L738.9,701.5 L742.4,707.8 L745.1,714.0 L747.2,720.3 L748.6,725.8 L749.6,732.8 L749.8,758.5 L750.4,665.4 L872.5,665.4" fill="none" stroke="#a2408e" stroke-width="1.1" stroke-linejoin="round"/>
<line x1="704.0" y1="665.4" x2="986.7" y2="665.4" stroke="#000" stroke-width="1" stroke-dasharray="4.9,5.1"/>
<rect x="707" y="660" width="2" height="104" fill="#000"/>
<rect x="707" y="762" width="280.1" height="2" fill="#000"/>
<line x1="704.0" y1="665.4" x2="707.0" y2="665.4" stroke="#000" stroke-width="1"/>
<text x="702.8" y="668.8" text-anchor="end" class="tks">0</text>
<line x1="704.0" y1="699.4" x2="707.0" y2="699.4" stroke="#000" stroke-width="1"/>
<text x="702.8" y="702.8" text-anchor="end" class="tks">-100</text>
<line x1="704.0" y1="732.1" x2="707.0" y2="732.1" stroke="#000" stroke-width="1"/>
<text x="702.8" y="735.5" text-anchor="end" class="tks">-200</text>
<line x1="708.4" y1="764" x2="708.4" y2="767.7" stroke="#000" stroke-width="1"/>
<text x="708.4" y="779.0" text-anchor="middle" class="tks">0</text>
<line x1="763.5" y1="764" x2="763.5" y2="767.7" stroke="#000" stroke-width="1"/>
<text x="763.5" y="779.0" text-anchor="middle" class="tks">0.02</text>
<line x1="817.9" y1="764" x2="817.9" y2="767.7" stroke="#000" stroke-width="1"/>
<text x="817.9" y="779.0" text-anchor="middle" class="tks">0.04</text>
<line x1="872.5" y1="764" x2="872.5" y2="767.7" stroke="#000" stroke-width="1"/>
<text x="872.5" y="779.0" text-anchor="middle" class="tks">0.06</text>
<line x1="926.9" y1="764" x2="926.9" y2="767.7" stroke="#000" stroke-width="1"/>
<text x="926.9" y="779.0" text-anchor="middle" class="tks">0.08</text>
<line x1="981.5" y1="764" x2="981.5" y2="767.7" stroke="#000" stroke-width="1"/>
<text x="980.9" y="779.0" text-anchor="middle" class="tks">0.1</text>
<path d="M896.2,769.7 L899.7,764.0 L903.2,769.7 Z" fill="#f5b800" stroke="#222" stroke-width="0.8"/>
<text x="848.0" y="793.2" text-anchor="middle" class="tksb">TIME (s)</text>
<text transform="translate(827.3,657.7) scale(0.915,1)" x="0" y="0" text-anchor="middle" class="ttls">ACC</text>
<path d="M708,662.5 L714.6,669 M708,669 L714.6,662.5" stroke="#000" stroke-width="1.8" fill="none"/>
</svg>
</body></html>
